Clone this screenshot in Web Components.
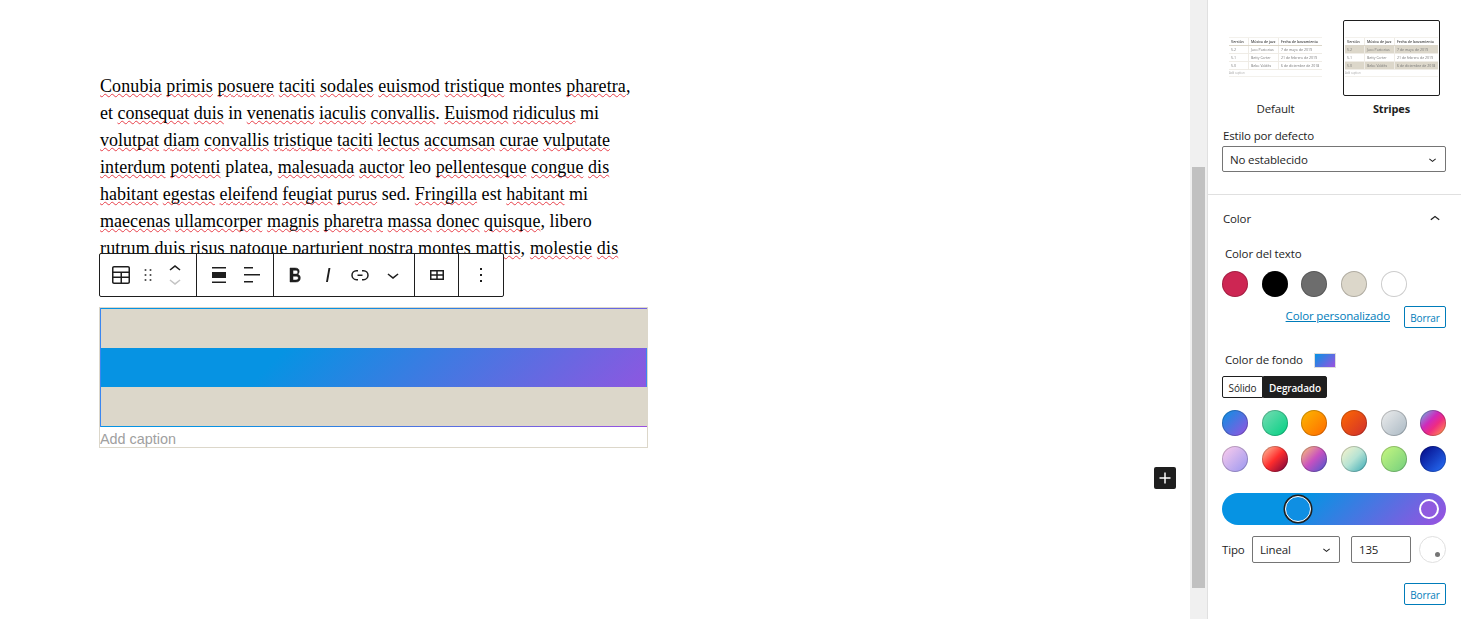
<!DOCTYPE html>
<html lang="es">
<head>
  <meta charset="UTF-8">
  <title>Editor</title>
  <style>
    html, body { margin: 0; height: 100%; overflow: hidden; background: #fff; }
  </style>
</head>
<body>
  <editor-page>
    <editor-canvas slot="canvas"></editor-canvas>
    <editor-sidebar slot="sidebar"></editor-sidebar>
  </editor-page>

<script>
  const SANS = `"Open Sans", "Noto Sans", sans-serif`;
  const icon = (d, size = 24) => `<svg width="${size}" height="${size}" viewBox="0 0 24 24" fill="currentColor"><path d="${d}"/></svg>`;

  const ICONS = {
    table: 'M19 3H5c-1.1 0-2 .9-2 2v14c0 1.1.9 2 2 2h14c1.1 0 2-.9 2-2V5c0-1.1-.9-2-2-2zM5 4.5h14c.3 0 .5.2.5.5v3.5h-15V5c0-.3.2-.5.5-.5zm8 5.5h6.5v3.5H13V10zm-1.5 3.5h-7V10h7v3.5zm-7 5.5v-4h7v4.5H5c-.3 0-.5-.2-.5-.5zm14.5.5h-6V15h6.5v4c0 .3-.2.5-.5.5z',
    drag: 'M8 7h2V5H8v2zm0 6h2v-2H8v2zm0 6h2v-2H8v2zm6-14v2h2V5h-2zm0 8h2v-2h-2v2zm0 6h2v-2h-2v2z',
    up: 'M6.5 12.4L12 8l5.5 4.4-.9 1.2L12 10l-4.5 3.6-1-1.2z',
    down: 'M17.5 11.6L12 16l-5.5-4.4.9-1.2L12 14l4.6-3.6 1 1.2z',
    wide: 'M5 5.5h14V4H5v1.5zM5 20h14v-1.5H5V20zM5 9v6h14V9H5z',
    left: 'M13 5.5H4V4h9v1.5Zm7 7H4V11h16v1.5Zm-7 7H4V18h9v1.5Z',
    bold: 'M14.7 11.3c1-.6 1.5-1.6 1.5-3 0-2.3-1.7-3.3-4.3-3.3H7v14h5.8c1.4 0 2.5-.3 3.3-1 .8-.7 1.2-1.7 1.2-2.9.1-1.9-.8-3.2-2.6-3.8zm-4.7-4h2.6c1.4 0 2.2.6 2.2 1.9s-.8 1.9-2.2 1.9H10V7.3zm3 9.7h-3v-3.8h3c1.5 0 2.3.6 2.3 1.9S14.500 17 13 17z',
    italic: 'M12.5 5L10 19h1.9l2.5-14z',
    link: 'M10 17.389H8.444A5.194 5.194 0 1 1 8.444 7H10v1.5H8.444a3.694 3.694 0 0 0 0 7.389H10v1.5ZM14 7h1.556a5.194 5.194 0 0 1 0 10.39H14v-1.5h1.556a3.694 3.694 0 0 0 0-7.39H14V7Zm-4.5 6h5v-1.5h-5V13Z',
    grid: 'M5 7h14v10H5V7zm1.5 1.5v2.75h4.75V8.5H6.500zm6.250 0v2.750h4.750V8.500h-4.750zM6.500 12.750v2.750h4.750v-2.750H6.500zm6.250 0v2.750h4.750v-2.750h-4.750z',
    more: 'M13 19h-2v-2h2v2zm0-6h-2v-2h2v2zm0-6h-2V5h2v2z',
    plus: 'M18 11.2h-5.2V6h-1.600v5.200H6v1.600h5.200V18h1.600v-5.200H18z'
  };

  class EditorPage extends HTMLElement {
    constructor() {
      super();
      this.attachShadow({ mode: 'open' }).innerHTML = `
        <style>
          :host { display: grid; grid-template-columns: 1190px 17px 1fr; height: 619px; overflow: hidden; }
          .track { background: #f0f0f0; padding: 167px 2px 0; box-sizing: border-box; }
          .thumb { height: 421px; background: #c1c1c1; }
        </style>
        <slot name="canvas"></slot>
        <div class="track"><div class="thumb"></div></div>
        <slot name="sidebar"></slot>
      `;
    }
  }

  class BlockToolbar extends HTMLElement {
    constructor() {
      super();
      const btn = (name, w, size = 24) => `<span class="b" style="width:${w}px">${icon(ICONS[name], size)}</span>`;
      this.attachShadow({ mode: 'open' }).innerHTML = `
        <style>
          :host { display: flex; position: absolute; left: 99px; top: 253px; height: 44px; box-sizing: border-box; background: #fff; border: 1px solid #1e1e1e; border-radius: 2px; color: #1e1e1e; }
          .g { display: flex; align-items: center; box-sizing: border-box; height: 100%; }
          .g + .g { border-left: 1px solid #1e1e1e; }
          .b { display: flex; align-items: center; justify-content: center; height: 42px; flex: none; }
          .b svg { flex: none; }
          .bold path { stroke: currentColor; stroke-width: .5px; }
          .mover { display: flex; flex-direction: column; width: 24px; height: 42px; align-items: center; justify-content: center; }
          .mover svg { display: block; margin: -6.2px 0; flex: none; }
          .mover svg:last-child { color: #c4c4c4; }
        </style>
        <div class="g" style="width:96px">
          ${btn('table', 42)}
          ${btn('drag', 12, 20)}
          <span class="b" style="width:42px"><span class="mover">${icon(ICONS.up)}${icon(ICONS.down)}</span></span>
        </div>
        <div class="g" style="width:77px">${btn('wide', 44)}${btn('left', 22)}</div>
        <div class="g" style="width:141px"><span class="bold">${btn('bold', 42)}</span>${btn('italic', 24)}${btn('link', 40)}${btn('down', 26)}</div>
        <div class="g" style="width:44px">${btn('grid', 43)}</div>
        <div class="g" style="width:45px">${btn('more', 44)}</div>
      `;
    }
  }

  class EditorCanvas extends HTMLElement {
    constructor() {
      super();
      this.attachShadow({ mode: 'open' }).innerHTML = `
        <style>
          :host { display: block; position: relative; padding: 72px 0 0 100px; height: 619px; box-sizing: border-box; }
          p { margin: 0 0 46px; padding-top: 1px; font: 18px/27px "Liberation Serif", serif; color: #000; white-space: nowrap; height: 188px; }
          p span { display: block; }
          u { text-decoration: underline wavy #e8404a 1px; text-decoration-skip-ink: none; text-underline-offset: 1px; }
          .plus { position: absolute; left: 1154px; top: 467px; width: 22px; height: 22px; display: flex; align-items: center; justify-content: center; background: #1e1e1e; color: #fff; border-radius: 2px; }
        </style>
        <p><span style="letter-spacing:.097px"><u>Conubia</u> <u>primis</u> <u>posuere</u> <u>taciti</u> <u>sodales</u> <u>euismod</u> <u>tristique</u> montes <u>pharetra</u>,</span><span style="letter-spacing:-.015px">et <u>consequat</u> <u>duis</u> in <u>venenatis</u> <u>iaculis</u> <u>convallis</u>. <u>Euismod</u> <u>ridiculus</u> mi</span><span><u>volutpat</u> <u>diam</u> <u>convallis</u> <u>tristique</u> <u>taciti</u> <u>lectus</u> <u>accumsan</u> <u>curae</u> <u>vulputate</u></span><span style="letter-spacing:.07px"><u>interdum</u> <u>potenti</u> platea, <u>malesuada</u> <u>auctor</u> leo <u>pellentesque</u> <u>congue</u> <u>dis</u></span><span style="letter-spacing:.03px"><u>habitant</u> <u>egestas</u> <u>eleifend</u> <u>feugiat</u> <u>purus</u> sed. <u>Fringilla</u> est <u>habitant</u> mi</span><span style="letter-spacing:.045px"><u>maecenas</u> <u>ullamcorper</u> <u>magnis</u> <u>pharetra</u> <u>massa</u> <u>donec</u> <u>quisque</u>, libero</span><span style="letter-spacing:.157px"><u>rutrum</u> <u>duis</u> <u>risus</u> <u>natoque</u> <u>parturient</u> <u>nostra</u> <u>montes</u> <u>mattis</u>, <u>molestie</u> <u>dis</u></span></p>
        <stripe-table></stripe-table>
        <block-toolbar></block-toolbar>
        <span class="plus">${icon(ICONS.plus, 22)}</span>
      `;
    }
  }

  class StripeTable extends HTMLElement {
    constructor() {
      super();
      this.attachShadow({ mode: 'open' }).innerHTML = `
        <style>
          :host { display: block; width: 549px; margin-left: -1px; box-sizing: border-box; border: 1px solid #dcd7ca; }
          .rows { background: linear-gradient(135deg, #0693e3 34%, #9b51e0 100%); border-left: 1px solid #3a86f0; box-sizing: border-box; height: 119px; padding: 1px 0; display: grid; grid-template-rows: 39px 39px 39px; }
          .s { background: #dcd7ca; }
          .mid { border-right: 1px solid #3a86f0; }
          .cap { height: 20px; overflow: hidden; font: 14.4px/24px "Liberation Sans", Arial, sans-serif; color: #a0a0a0; }
        </style>
        <div class="rows"><div class="s"></div><div class="mid"></div><div class="s"></div></div>
        <div class="cap">Add caption</div>
      `;
    }
  }

  class TablePreview extends HTMLElement {
    constructor() {
      super();
      const rows = [['5.2', 'Jaco Pastorius', '7 de mayo de 2019'], ['5.1', 'Betty Carter', '21 de febrero de 2019'], ['5.0', 'Bebo Valdés', '6 de diciembre de 2018']];
      this.attachShadow({ mode: 'open' }).innerHTML = `
        <style>
          :host { display: block; width: 93px; font: 3.5px/8px ${SANS}; letter-spacing: 0; color: #777; filter: blur(.45px); }
          .r { display: grid; grid-template-columns: 17px 30px 1fr; height: 8px; border-bottom: 1px solid #efece6; box-sizing: border-box; padding-left: 2px; white-space: nowrap; overflow: hidden; }
          .r span + span { border-left: 1px solid #efece6; padding-left: 2px; }
          .h { color: #444; font-weight: 600; border-bottom-color: #dcd7ca; height: 9px; border-top: 1px solid #f3f1ec; }
          :host([stripes]) .r:nth-of-type(2), :host([stripes]) .r:nth-of-type(4) { background: #dcd7ca; }
          .c { font-size: 2.8px; line-height: 6px; color: #aaa; border-bottom: 1px solid #f3f1ec; }
        </style>
        <div class="r h"><span>Versión</span><span>Músico de jazz</span><span>Fecha de lanzamiento</span></div>
        ${rows.map(r => `<div class="r">${r.map(c => `<span>${c}</span>`).join('')}</div>`).join('')}
        <div class="c">Add caption</div>
      `;
    }
  }

  class SwatchRow extends HTMLElement {
    constructor() {
      super();
      this.attachShadow({ mode: 'open' });
    }
    connectedCallback() {
      const items = this.getAttribute('colors').split('|');
      this.shadowRoot.innerHTML = `
        <style>
          :host { display: grid; grid-template-columns: repeat(6, 26px); column-gap: 13.7px; }
          i { display: block; width: 26px; height: 26px; border-radius: 50%; box-sizing: border-box; box-shadow: inset 0 0 0 1px rgba(0,0,0,.2); }
        </style>
        ${items.map(c => `<i style="background:${c}"></i>`).join('')}
      `;
    }
  }

  class OutlineButton extends HTMLElement {
    constructor() {
      super();
      this.attachShadow({ mode: 'open' }).innerHTML = `
        <style>
          :host { display: flex; align-items: center; justify-content: center; width: 42px; height: 22px; box-sizing: border-box; border: 1px solid #007cba; border-radius: 2px; color: #007cba; font: 10px/1 ${SANS}; background: #fff; padding-top: 2px; }
        </style>
        <slot></slot>
      `;
    }
  }

  class SelectBox extends HTMLElement {
    constructor() {
      super();
      this.attachShadow({ mode: 'open' }).innerHTML = `
        <style>
          :host { display: flex; align-items: center; justify-content: space-between; box-sizing: border-box; border: 1px solid #757575; border-radius: 2px; padding: 1px 5px 0 7px; font: 11.5px/1 ${SANS}; letter-spacing: -.15px; color: #1e1e1e; background: #fff; }
          svg { display: block; margin-top: -1px; }
        </style>
        <slot></slot>${icon(ICONS.down, 15)}
      `;
    }
  }

  class EditorSidebar extends HTMLElement {
    constructor() {
      super();
      const grads = [
        'linear-gradient(135deg,#0693e3,#9b51e0)',
        'linear-gradient(135deg,#7adcb4,#00d082)',
        'linear-gradient(135deg,#fcb900,#ff6900)',
        'linear-gradient(135deg,#ff6900,#cf2e2e)',
        'linear-gradient(135deg,#eee,#a9b8c3)',
        'linear-gradient(135deg,#4aeadc 0%,#9778d1 20%,#cf2aba 40%,#ee2c82 60%,#fb6962 80%,#fef84c 100%)',
        'linear-gradient(135deg,#ffceec,#9896f0)',
        'linear-gradient(135deg,#fecda5,#fe2d2d 50%,#6b003e)',
        'linear-gradient(135deg,#ffcb70,#c751c0 50%,#4158d0)',
        'linear-gradient(135deg,#fff5cb,#b6e3d4 50%,#33a7b5)',
        'linear-gradient(135deg,#caf880,#71ce7e)',
        'linear-gradient(135deg,#020381,#2874fc)'
      ].join('|');
      this.attachShadow({ mode: 'open' }).innerHTML = `
        <style>
          :host { display: block; height: 619px; box-sizing: border-box; border-left: 1px solid #e0e0e0; font: 11.5px/16px ${SANS}; letter-spacing: -.15px; color: #1e1e1e; background: #fff; overflow: hidden; }
          .styles { padding: 20px 15px 22px 14px; border-bottom: 1px solid #e0e0e0; height: 195px; box-sizing: border-box; }
          .pick { display: grid; grid-template-columns: 97px 97px; column-gap: 19px; margin-left: 5px; }
          .frame { height: 76px; box-sizing: border-box; display: flex; flex-direction: column; align-items: center; padding-top: 16px; border: 1px solid transparent; border-radius: 2px; }
          .on { border: 1px solid #1e1e1e; }
          .cap { text-align: center; margin-top: 5px; height: 16px; }
          .cap.b { font-weight: 700; font-size: 11px; }
          .lab { margin-top: 11px; height: 15px; }
          select-box.main { height: 26px; width: 224px; margin-top: 3px; }
          .color { padding: 0 15px 0 14px; }
          .head { display: flex; justify-content: space-between; align-items: center; height: 48px; padding-left: 1px; }
          .head svg { display: block; margin-right: 1px; }
          .sub { padding-left: 3px; height: 16px; }
          swatch-row { margin-top: 9px; }
          .act { display: flex; justify-content: flex-end; align-items: center; margin-top: 9px; height: 22px; }
          a { color: #007cba; text-decoration: underline; margin-right: 14px; margin-bottom: 2px; white-space: nowrap; }
          .bg { display: flex; align-items: center; margin-top: 24px; }
          .bg span:first-child { width: 89px; }
          .ind { width: 22px; height: 15px; box-sizing: border-box; border: 1px solid #ddd; background: linear-gradient(135deg,#0693e3,#9b51e0); }
          .tabs { display: flex; margin-top: 8px; height: 22px; font-size: 10px; line-height: 22px; }
          .tabs span { box-sizing: border-box; text-align: center; border: 1px solid #1e1e1e; line-height: 22px; }
          .tabs .solid { width: 41px; border-radius: 2px 0 0 2px; }
          .tabs .grad { width: 64px; background: #1e1e1e; color: #fff; font-weight: 600; border-radius: 0 2px 2px 0; }
          .bar { position: relative; height: 32px; width: 224px; margin-top: 21px; border-radius: 16px; background: linear-gradient(135deg,#0693e3 34%,#9b51e0 100%); }
          .knob { position: absolute; border-radius: 50%; box-sizing: border-box; }
          .k1 { left: 63px; top: 3px; width: 26px; height: 26px; background: #0f8fe3; border: 1.5px solid #fff; box-shadow: 0 0 0 1.5px #1e1e1e; }
          .k2 { left: 197px; top: 6px; width: 20px; height: 20px; background: #8f5be0; border: 2px solid #fff; }
          .type { display: flex; align-items: center; margin-top: 11px; }
          .type > span:first-child { width: 23px; }
          .type select-box { height: 27px; width: 88px; margin-left: 7px; }
          .num { width: 60px; height: 27px; margin-left: 11px; box-sizing: border-box; border: 1px solid #757575; border-radius: 2px; padding: 0 7px; line-height: 25px; }
          .dial { position: relative; width: 27px; height: 27px; margin-left: 8px; box-sizing: border-box; border: 1px solid #e0e0e0; border-radius: 50%; }
          .dial::after { content: ""; position: absolute; left: 15px; top: 15px; width: 5px; height: 5px; border-radius: 50%; background: #757575; }
          .last { margin-top: 20px; }
        </style>
        <div class="styles">
          <div class="pick">
            <div><div class="frame"><table-preview></table-preview></div><div class="cap">Default</div></div>
            <div><div class="frame on"><table-preview stripes></table-preview></div><div class="cap b">Stripes</div></div>
          </div>
          <div class="lab" style="margin-left:1px">Estilo por defecto</div>
          <select-box class="main">No establecido</select-box>
        </div>
        <div class="color">
          <div class="head"><span>Color</span>${icon(ICONS.up, 20)}</div>
          <div class="sub" style="margin-top:3px">Color del texto</div>
          <swatch-row colors="#cd2653|#000|#6d6d6d|#dcd7ca|#fff" style="margin-top:9px"></swatch-row>
          <div class="act"><a>Color personalizado</a><outline-button>Borrar</outline-button></div>
          <div class="bg sub"><span>Color de fondo</span><span class="ind"></span></div>
          <div class="tabs"><span class="solid">Sólido</span><span class="grad">Degradado</span></div>
          <swatch-row colors="${grads}" style="row-gap:10px;margin-top:12px"></swatch-row>
          <div class="bar"><span class="knob k1"></span><span class="knob k2"></span></div>
          <div class="type"><span>Tipo</span><select-box>Lineal</select-box><span class="num">135</span><span class="dial"></span></div>
          <div class="act last"><outline-button>Borrar</outline-button></div>
        </div>
      `;
    }
  }

  customElements.define('editor-page', EditorPage);
  customElements.define('block-toolbar', BlockToolbar);
  customElements.define('stripe-table', StripeTable);
  customElements.define('table-preview', TablePreview);
  customElements.define('swatch-row', SwatchRow);
  customElements.define('outline-button', OutlineButton);
  customElements.define('select-box', SelectBox);
  customElements.define('editor-canvas', EditorCanvas);
  customElements.define('editor-sidebar', EditorSidebar);
</script>
</body>
</html>
